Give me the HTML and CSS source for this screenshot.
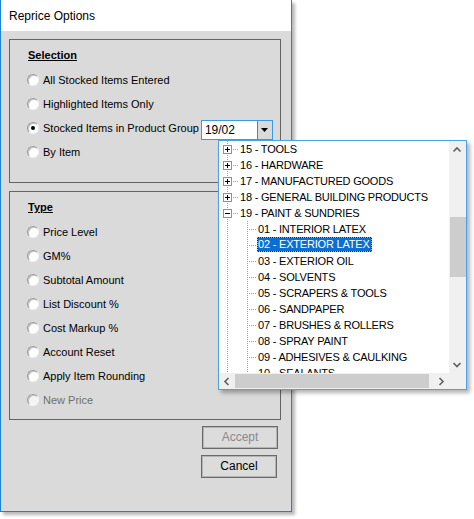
FILE: index.html
```html
<!DOCTYPE html>
<html>
<head>
<meta charset="utf-8">
<link rel="stylesheet" href="styles.css">
</head>
<body>
<div class="window">
  <div class="titlebar">Reprice Options</div>
  <div class="client">
    <div class="group selection">
      <div class="heading">Selection</div>
      <div class="rows">
        <div class="row"><span class="radio"></span><span class="lbl">All Stocked Items Entered</span></div>
        <div class="row"><span class="radio"></span><span class="lbl">Highlighted Items Only</span></div>
        <div class="row"><span class="radio checked"></span><span class="lbl">Stocked Items in Product Group</span>
          <div class="combo"><span class="combo-text">19/02</span><span class="combo-btn"><svg width="7" height="4" viewBox="0 0 7 4"><polygon points="0,0 7,0 3.5,4" fill="#000"/></svg></span></div>
        </div>
        <div class="row"><span class="radio"></span><span class="lbl">By Item</span></div>
      </div>
    </div>
    <div class="group type">
      <div class="heading">Type</div>
      <div class="rows">
        <div class="row"><span class="radio"></span><span class="lbl">Price Level</span></div>
        <div class="row"><span class="radio"></span><span class="lbl">GM%</span></div>
        <div class="row"><span class="radio"></span><span class="lbl">Subtotal Amount</span></div>
        <div class="row"><span class="radio"></span><span class="lbl">List Discount %</span></div>
        <div class="row"><span class="radio"></span><span class="lbl">Cost Markup %</span></div>
        <div class="row"><span class="radio"></span><span class="lbl">Account Reset</span></div>
        <div class="row"><span class="radio"></span><span class="lbl">Apply Item Rounding</span></div>
        <div class="row disabled"><span class="radio"></span><span class="lbl">New Price</span></div>
      </div>
    </div>
    <div class="buttons">
      <div class="btn accept">Accept</div>
      <div class="btn cancel">Cancel</div>
    </div>
  </div>
</div>

<div class="popup">
  <div class="tree">
    <div class="node top"><span class="rail"><span class="exp plus"></span></span><span class="text">15 - TOOLS</span></div>
    <div class="node top"><span class="rail"><span class="exp plus"></span></span><span class="text">16 - HARDWARE</span></div>
    <div class="node top"><span class="rail"><span class="exp plus"></span></span><span class="text">17 - MANUFACTURED GOODS</span></div>
    <div class="node top"><span class="rail"><span class="exp plus"></span></span><span class="text">18 - GENERAL BUILDING PRODUCTS</span></div>
    <div class="node top"><span class="rail"><span class="exp"></span></span><span class="text">19 - PAINT &amp; SUNDRIES</span></div>
    <div class="node child"><span class="rail"></span><span class="rail2"></span><span class="text">01 - INTERIOR LATEX</span></div>
    <div class="node child"><span class="rail"></span><span class="rail2"></span><span class="text selected">02 - EXTERIOR LATEX</span></div>
    <div class="node child"><span class="rail"></span><span class="rail2"></span><span class="text">03 - EXTERIOR OIL</span></div>
    <div class="node child"><span class="rail"></span><span class="rail2"></span><span class="text">04 - SOLVENTS</span></div>
    <div class="node child"><span class="rail"></span><span class="rail2"></span><span class="text">05 - SCRAPERS &amp; TOOLS</span></div>
    <div class="node child"><span class="rail"></span><span class="rail2"></span><span class="text">06 - SANDPAPER</span></div>
    <div class="node child"><span class="rail"></span><span class="rail2"></span><span class="text">07 - BRUSHES &amp; ROLLERS</span></div>
    <div class="node child"><span class="rail"></span><span class="rail2"></span><span class="text">08 - SPRAY PAINT</span></div>
    <div class="node child"><span class="rail"></span><span class="rail2"></span><span class="text">09 - ADHESIVES &amp; CAULKING</span></div>
    <div class="node child"><span class="rail"></span><span class="rail2"></span><span class="text">10 - SEALANTS</span></div>
  </div>
  <div class="vscroll">
    <span class="arrow-v"><svg width="16" height="17" viewBox="0 0 16 17"><polyline points="4.5,10.5 8,7 11.5,10.5" fill="none" stroke="#606060" stroke-width="1.6"/></svg></span>
    <span class="vtrack"><span class="vthumb"></span></span>
    <span class="arrow-v"><svg width="16" height="17" viewBox="0 0 16 17"><polyline points="4.5,7 8,10.5 11.5,7" fill="none" stroke="#606060" stroke-width="1.6"/></svg></span>
  </div>
  <div class="hscroll">
    <span class="arrow-h"><svg width="16" height="17" viewBox="0 0 16 17"><polyline points="9.5,5 6,8.5 9.5,12" fill="none" stroke="#606060" stroke-width="1.6"/></svg></span>
    <span class="hthumb"></span>
    <span class="hrest"></span>
    <span class="arrow-h"><svg width="16" height="17" viewBox="0 0 16 17"><polyline points="6.5,5 10,8.5 6.5,12" fill="none" stroke="#606060" stroke-width="1.6"/></svg></span>
  </div>
  <div class="corner"></div>
</div>
</body>
</html>
```

FILE: styles.css
```css
html, body {
  margin: 0;
  padding: 0;
  background: #ffffff;
}
body {
  width: 474px;
  height: 519px;
  overflow: hidden;
  position: relative;
  font-family: "Liberation Sans", Arial, sans-serif;
  font-size: 11px;
  color: #000;
}

.window {
  width: 292px;
  height: 512px;
  box-sizing: border-box;
  border: 1px solid #1883d7;
  border-top: none;
  display: flex;
  flex-direction: column;
  box-shadow: 3px 3px 3px rgba(0, 0, 0, 0.28);
  background: #dadada;
}

.titlebar {
  height: 31px;
  line-height: 32px;
  background: #ffffff;
  padding-left: 8px;
  font-size: 12px;
  color: #000;
  flex: none;
}

.client {
  flex: 1;
  background: #dadada;
  padding: 8px 9px 0 8px;
  display: flex;
  flex-direction: column;
}

.group {
  border: 1px solid #646464;
  padding: 7px 0 0 17px;
  box-sizing: border-box;
  width: 272px;
}
.group.selection {
  height: 144px;
}
.group.type {
  height: 229px;
  margin-top: 8px;
}

.heading {
  height: 16px;
  line-height: 16px;
  font-weight: bold;
  text-decoration: underline;
  margin-left: 1px;
}

.rows {
  margin-top: 5px;
  display: flex;
  flex-direction: column;
}

.row {
  height: 24px;
  display: flex;
  align-items: center;
}
.row .lbl {
  margin-left: 4px;
  white-space: nowrap;
}
.row.disabled .lbl {
  color: #707070;
}

.radio {
  width: 12px;
  height: 12px;
  box-sizing: border-box;
  border-radius: 50%;
  background: #ffffff;
  border: 1px solid;
  border-color: #9a9a9a #f4f4f4 #f4f4f4 #9a9a9a;
  box-shadow: inset 1px 1px 0 #c4c4c4;
  flex: none;
  display: flex;
  align-items: center;
  justify-content: center;
}
.radio.checked::after {
  content: "";
  width: 4px;
  height: 4px;
  border-radius: 50%;
  background: #000;
}
.row.disabled .radio {
  background: #f4f4f4;
}

.combo {
  align-self: flex-end;
  margin-left: 2px;
  width: 72px;
  height: 20px;
  box-sizing: border-box;
  border: 1px solid #3a9be4;
  background: #ffffff;
  display: flex;
}
.combo-text {
  flex: 1;
  padding-left: 3px;
  line-height: 18px;
  font-size: 12px;
}
.combo-btn {
  width: 14px;
  border-left: 1px solid #7a7a7a;
  background: #dadada;
  display: flex;
  align-items: center;
  justify-content: center;
}

.buttons {
  display: flex;
  flex-direction: column;
  align-items: flex-end;
  margin-top: 6px;
  width: 272px;
}
.btn {
  width: 76px;
  height: 23px;
  box-sizing: border-box;
  border: 1px solid #6a6a6a;
  box-shadow: inset 0 0 0 1px #b4b4b4;
  background: #dcdcdc;
  text-align: center;
  line-height: 21px;
  font-size: 12px;
}
.btn.accept {
  margin-right: 3px;
  color: #8a8a8a;
}
.btn.cancel {
  margin-right: 4px;
  margin-top: 6px;
}

/* dropdown tree popup */
.popup {
  position: absolute;
  left: 218px;
  top: 140px;
  width: 249px;
  height: 250px;
  box-sizing: border-box;
  border: 1px solid #4aa3e6;
  background: #ffffff;
  box-shadow: 3px 3px 4px rgba(0, 0, 0, 0.3);
  display: grid;
  grid-template-columns: 1fr 17px;
  grid-template-rows: 1fr 16px;
}

.tree {
  overflow: hidden;
  font-size: 11px;
  letter-spacing: -0.2px;
}

.node {
  height: 16px;
  display: flex;
  white-space: nowrap;
}

.rail, .rail2 {
  width: 19px;
  height: 16px;
  flex: none;
  display: flex;
  align-items: flex-start;
  background-repeat: no-repeat;
}
.node.top .rail {
  background-image:
    repeating-linear-gradient(to bottom, #a0a0a0 0 1px, transparent 1px 2px),
    repeating-linear-gradient(to right, #a0a0a0 0 1px, transparent 1px 2px);
  background-size: 1px 16px, 11px 1px;
  background-position: 8px 0, 8px 8px;
}
.node.child .rail {
  background-image: repeating-linear-gradient(to bottom, #a0a0a0 0 1px, transparent 1px 2px);
  background-size: 1px 16px;
  background-position: 8px 0;
}
.node.child .rail2 {
  background-image:
    repeating-linear-gradient(to bottom, #a0a0a0 0 1px, transparent 1px 2px),
    repeating-linear-gradient(to right, #a0a0a0 0 1px, transparent 1px 2px);
  background-size: 1px 16px, 10px 1px;
  background-position: 9px 0, 9px 8px;
}

.exp {
  width: 9px;
  height: 9px;
  box-sizing: border-box;
  margin-left: 4px;
  margin-top: 4px;
  border: 1px solid #919191;
  background-color: #ffffff;
  background-image: linear-gradient(#000, #000);
  background-size: 5px 1px;
  background-position: center;
  background-repeat: no-repeat;
}
.exp.plus {
  background-image: linear-gradient(#000, #000), linear-gradient(#000, #000);
  background-size: 5px 1px, 1px 5px;
  background-position: center, center;
  background-repeat: no-repeat, no-repeat;
}

.text {
  height: 16px;
  line-height: 16px;
  padding: 0 2px 0 1px;
  box-sizing: border-box;
}
.node.top .text {
  margin-left: 1px;
}
.text.selected {
  background: #0a6fd0;
  color: #ffffff;
  box-shadow: inset 0 0 0 1px #0b2e57;
  outline: 1px dotted #e8a93a;
  outline-offset: -1px;
  height: 15px;
  line-height: 15px;
}

.vscroll {
  grid-column: 2;
  grid-row: 1;
  background: #f0f0f0;
  display: flex;
  flex-direction: column;
}
.arrow-v {
  height: 17px;
  display: flex;
  flex: none;
}
.vtrack {
  flex: 1;
  display: flex;
  flex-direction: column;
}
.vthumb {
  margin-top: 59px;
  margin-left: 1px;
  height: 60px;
  background: #cdcdcd;
}

.hscroll {
  grid-column: 1;
  grid-row: 2;
  background: #f0f0f0;
  display: flex;
}
.arrow-h {
  width: 16px;
  flex: none;
  display: flex;
  align-items: center;
}
.hthumb {
  width: 194px;
  margin: 1px 0;
  background: #cdcdcd;
  flex: none;
}
.hrest {
  flex: 1;
}
.corner {
  grid-column: 2;
  grid-row: 2;
  background: #f0f0f0;
}
```
